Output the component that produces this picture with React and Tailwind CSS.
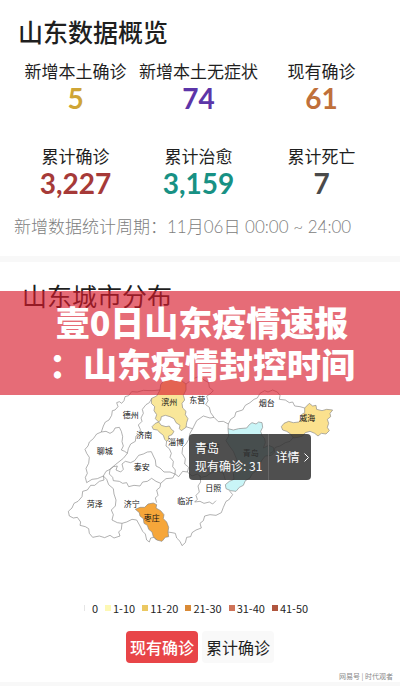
import React from 'react';

const stats = [
  { label: '新增本土确诊', value: '5', color: 'text-[#cfa536]' },
  { label: '新增本土无症状', value: '74', color: 'text-[#5c35a8]' },
  { label: '现有确诊', value: '61', color: 'text-[#c0703a]' },
  { label: '累计确诊', value: '3,227', color: 'text-[#a63a38]' },
  { label: '累计治愈', value: '3,159', color: 'text-[#189184]' },
  { label: '累计死亡', value: '7', color: 'text-[#4a4a4a]' },
];

const legend = [
  { label: '0', color: 'bg-white border-l border-[#e5e5e5]' },
  { label: '1-10', color: 'bg-[#fdf8b4]' },
  { label: '11-20', color: 'bg-[#ebc862]' },
  { label: '21-30', color: 'bg-[#d98a36]' },
  { label: '31-40', color: 'bg-[#cf7358]' },
  { label: '41-50', color: 'bg-[#b0563f]' },
];

const cities = [
  ['滨州', 328, 95],
  ['东营', 412, 90],
  ['德州', 212, 135],
  ['济南', 253, 195],
  ['淄博', 348, 217],
  ['聊城', 134, 243],
  ['泰安', 245, 290],
  ['菏泽', 104, 402],
  ['济宁', 215, 402],
  ['枣庄', 275, 445],
  ['临沂', 376, 392],
  ['潍坊', 455, 230],
  ['青岛', 572, 248],
  ['烟台', 620, 98],
  ['威海', 742, 145],
  ['日照', 460, 355],
];

const borders = [
  // Dezhou and Liaocheng, outer edge
  'M300 60 L276 62 L250 61 L232 66 L215 65 L206 77 L195 80 L192 92 L185 100 L178 95 L170 98 L174 110 L165 120 L157 122 L155 136 L147 150 L136 156 L130 168 L124 186 L110 192 L100 206 L88 216 L84 228 L75 238 L80 250 L88 262 L86 280 L78 295 L82 310 L76 322 L80 338 L96 328 L112 326 L130 318 L138 304 L150 298 L166 284 L190 265 L202 250',
  'M124 186 L138 184 L150 190 L160 184 L165 174 L178 172 L184 184 L188 200 L186 215 L190 228 L184 240 L194 244 L202 250',
  // Dezhou / Jinan
  'M275 85 L268 98 L258 104 L247 118 L250 130 L243 144 L246 154 L235 165 L241 178 L238 192 L228 198 L226 214 L212 222 L205 236 L202 250',
  // Jinan / Taian
  'M150 298 L160 290 L172 288 L168 300 L182 306 L190 298 L186 282 L196 274 L212 278 L224 272 L236 256 L250 252 L262 246 L274 245 L280 258 L286 270 L288 288 L300 294 L312 306 L330 306 L345 312',
  'M150 298 L148 312 L158 322 L160 332 L178 334 L188 340 L200 338 L206 350 L222 346 L240 348 L248 336 L262 334 L275 325 L288 334 L302 340 L318 326 L338 324 L345 312',
  // Heze
  'M130 318 L132 330 L118 334 L104 346 L92 346 L82 360 L68 364 L66 380 L54 394 L42 400 L36 414 L25 424 L28 438 L40 444 L52 442 L62 456 L60 466 L76 470 L86 476 L88 490 L98 502 L118 498 L134 503 L150 496 L162 504 L180 498 L176 486 L184 478 L186 460 L172 458 L156 450 L160 434 L154 420 L166 408 L168 390 L162 372 L160 356 L146 344 L140 328 L130 318',
  // Jining
  'M186 460 L200 456 L216 448 L230 450 L240 468 L248 484 L256 492 L260 510 L268 516 L272 504 L282 502 L290 510',
  'M302 340 L300 352 L290 360 L294 376 L286 384 L290 398',
  // Zibo
  'M320 213 L318 228 L328 236 L334 250 L330 262 L340 274 L338 290 L346 300 L345 312 L356 320 L368 304 L382 306 L386 292 L374 282 L376 266 L366 250 L368 232 L378 222 L386 208 L390 190 L398 176 L410 152 L430 138 L450 144 L462 142 L475 155 L490 154 L505 162',
  'M378 170 L390 174 L398 176',
  'M382 306 L396 318 L412 312 L424 322 L440 318 L456 306 L476 304 L490 310 L496 330',
  // Dongying
  'M378 42 L400 26 L420 18 L432 30 L446 38 L448 52 L460 62 L450 72 L440 78 L444 92 L437 104 L448 112 L452 128 L462 142',
  // Yantai coast
  'M505 162 L512 148 L524 140 L528 126 L548 120 L556 106 L570 98 L582 88 L592 84 L600 70 L614 62 L624 66 L638 60 L652 66 L660 76 L658 88 L676 90 L688 98 L698 96 L704 108 L720 110 L734 114',
  'M505 162 L504 176',
  'M700 202 L690 214 L676 218 L660 228 L646 232 L640 244 L630 250',
  // Rizhao and the Linyi coast
  'M420 316 L422 336 L414 348 L418 366 L408 376 L412 388 L404 396 L420 394 L432 400 L448 396 L458 402 L468 392',
  'M508 362 L518 374 L506 390 L498 394 L490 412 L484 428 L468 436 L450 434 L434 438 L430 452 L420 460 L424 474 L408 480 L396 488 L392 500 L380 502 L376 518 L366 527 L360 514 L350 504 L346 490 L336 488 L324 486',
];

const ShandongMap = () => (
  <svg viewBox="-15 0 870 540" className="block w-full" role="img" aria-label="山东城市分布">
    <g stroke="#8a8a8a" strokeWidth="2" strokeLinejoin="round" fill="none">
      <path
        fill="#f9e79a"
        d="M300 60 L302 44 L310 34 L322 30 L340 26 L360 28 L370 36 L378 42 L378 60 L370 76 L374 90 L366 100 L368 114 L378 124 L376 134 L384 146 L380 158 L378 172 L364 182 L358 176 L360 166 L348 158 L342 146 L330 140 L316 136 L304 140 L302 150 L296 156 L304 166 L318 170 L328 168 L334 178 L342 184 L336 194 L326 198 L326 208 L320 214 L314 208 L310 196 L300 188 L292 180 L280 178 L276 170 L286 160 L296 156 L286 146 L290 134 L282 122 L284 110 L274 100 L275 85 L290 78 Z"
      />
      <path
        fill="#fbe18e"
        d="M748 100 L758 108 L768 106 L770 118 L786 122 L800 118 L818 120 L810 130 L812 140 L802 148 L806 160 L802 172 L808 182 L798 192 L784 190 L774 198 L764 190 L750 184 L736 188 L728 198 L714 202 L700 204 L692 192 L680 184 L668 180 L664 170 L672 160 L686 154 L700 158 L716 156 L728 146 L724 134 L734 128 L734 114 Z"
      />
      <path
        fill="#c9f5f7"
        d="M504 176 L520 180 L536 176 L560 174 L568 164 L576 158 L588 162 L596 156 L606 158 L608 172 L602 184 L606 196 L614 206 L616 218 L610 234 L626 226 L640 232 L644 246 L634 256 L616 258 L606 270 L598 286 L590 302 L576 312 L570 324 L556 332 L550 346 L538 352 L528 364 L512 362 L498 356 L496 344 L508 334 L522 328 L520 310 L528 290 L530 268 L520 244 L508 228 L498 212 L506 198 Z"
      />
      <path
        fill="#f6a63a"
        d="M226 418 L240 412 L254 412 L264 402 L280 399 L290 404 L288 414 L302 422 L312 434 L310 446 L320 456 L326 472 L324 486 L326 500 L316 502 L306 514 L290 510 L280 500 L276 486 L266 478 L262 466 L252 460 L250 446 L240 438 L238 428 Z"
      />
      {borders.map((d) => (
        <path key={d} d={d} />
      ))}
    </g>
    <g fill="#111111" fontSize="24" textAnchor="middle">
      {cities.map(([name, x, y]) => (
        <text key={name} x={x} y={y + 9}>
          {name}
        </text>
      ))}
    </g>
  </svg>
);

const MapTooltip = () => (
  <div className="absolute left-[134px] top-16 flex h-[46px] items-center rounded-sm bg-[#303030]/85 text-xs text-white">
    <div className="flex h-full w-20 flex-col justify-center border-r border-[#666] pl-1.5 leading-[18px] whitespace-nowrap">
      <div>青岛</div>
      <div>现有确诊: 31</div>
    </div>
    <button type="button" className="flex w-[42px] items-center justify-center gap-1 pl-1 whitespace-nowrap">
      详情
      <svg viewBox="0 0 5 9" className="h-[9px] w-[5px]" fill="none" stroke="currentColor">
        <path d="M0.5 0.5 L4.5 4.5 L0.5 8.5" />
      </svg>
    </button>
  </div>
);

const Overview = () => (
  <section className="pt-[15px] pb-[17px]">
    <h2 className="pl-[18px] text-[25px] leading-8 font-medium">山东数据概览</h2>
    <div className="mt-3 grid grid-cols-3 gap-y-[30px] pr-[17px] pl-3.5 text-center">
      {stats.map((item) => (
        <div key={item.label}>
          <div className="text-[17px] leading-6 whitespace-nowrap">{item.label}</div>
          <div className={`font-['Lato','Noto_Sans_CJK_SC',sans-serif] text-[28px] leading-[31px] font-bold ${item.color}`}>
            {item.value}
          </div>
        </div>
      ))}
    </div>
    <p className="mt-4 flex pl-3.5 font-['Lato','Noto_Sans_CJK_SC',sans-serif] text-[17px] leading-6 font-light whitespace-nowrap text-[#808080]">
      <span>新增数据统计周期：</span>
      <span>11月06日 00:00 ~ 24:00</span>
    </p>
  </section>
);

const Banner = () => (
  <div className="absolute inset-x-0 top-[29px] flex h-[104px] items-center justify-center bg-[#d8192a]/64">
    <h1 className="pl-1 text-center text-[34px] leading-[42px] font-black text-white">
      壹0日山东疫情速报
      <br />
      ：山东疫情封控时间
    </h1>
  </div>
);

const App = () => (
  <main className="bg-white font-['Noto_Sans_CJK_SC',sans-serif] text-[#1f1f1f]" lang="zh-CN">
    <Overview />
    <section className="relative border-t-[6px] border-[#f8f8f8] pt-[17px]">
      <h2 className="pl-[22px] text-[25px] leading-8">山东城市分布</h2>
      <div className="relative mx-auto mt-[59px] w-[290px]">
        <ShandongMap />
        <MapTooltip />
      </div>
      <Banner />
      <ul className="mt-[50px] flex justify-center gap-[7px] pr-2 text-[11px] leading-4">
        {legend.map((item) => (
          <li key={item.label} className="flex items-center gap-0.5">
            <span className={`size-1.5 ${item.color}`} />
            {item.label}
          </li>
        ))}
      </ul>
      <div className="mt-[15px] flex justify-center gap-1 leading-8">
        <button type="button" className="h-8 rounded bg-[#e84548] px-1 text-base font-medium text-white">
          现有确诊
        </button>
        <button type="button" className="h-8 rounded bg-[#f9f9f9] px-1 text-base">
          累计确诊
        </button>
      </div>
    </section>
    <footer className="border-b-4 border-[#f8f8f8] pt-2 pr-[7px] text-right text-[7px] leading-[11px] text-[#888]">
      网易号 | 时代观者
    </footer>
  </main>
);

export default App;
